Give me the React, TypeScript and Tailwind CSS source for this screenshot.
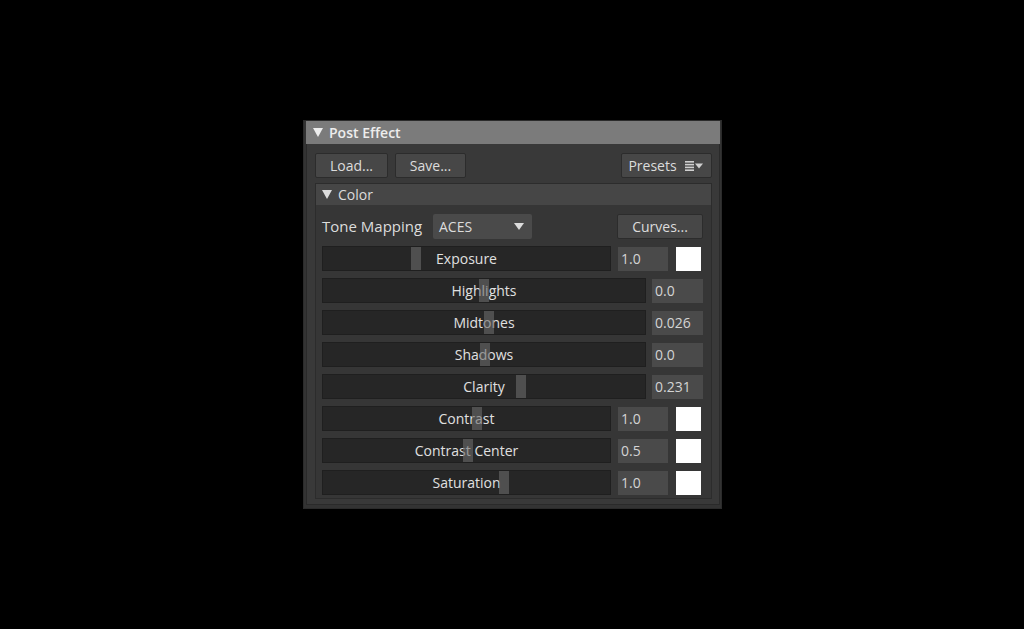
const font = { fontFamily: '"Open Sans", "Noto Sans", sans-serif' };

type Row = { label: string; value: string; handle: number; swatch?: boolean };

const rows: Row[] = [
  { label: "Exposure", value: "1.0", handle: 88, swatch: true },
  { label: "Highlights", value: "0.0", handle: 156 },
  { label: "Midtones", value: "0.026", handle: 161 },
  { label: "Shadows", value: "0.0", handle: 157 },
  { label: "Clarity", value: "0.231", handle: 193 },
  { label: "Contrast", value: "1.0", handle: 149, swatch: true },
  { label: "Contrast Center", value: "0.5", handle: 140, swatch: true },
  { label: "Saturation", value: "1.0", handle: 176, swatch: true },
];

function Button({ children, className = "" }: { children: React.ReactNode; className?: string }) {
  return (
    <div
      className={`flex h-[25px] items-center justify-center rounded-[2px] border border-[#2c2c2c] bg-[#474747] text-[14px] text-[#dcdcdc] ${className}`}
    >
      {children}
    </div>
  );
}

function SliderRow({ row }: { row: Row }) {
  return (
    <div className="flex h-[25px] items-center">
      <div
        className={`relative flex h-[25px] items-center justify-center border border-[#1f1f1f] bg-[#262626] text-[14px] text-[#e0e0e0] ${
          row.swatch ? "w-[289px]" : "w-[324px]"
        }`}
      >
        <span>{row.label}</span>
        <div
          className="absolute top-0 h-full w-[10px] bg-[#6a6a6a]/60"
          style={{ left: row.handle }}
        />
      </div>
      <div
        className={`flex h-[24px] items-center bg-[#4a4a4a] pl-[3px] text-[14px] text-[#d4d4d4] ${
          row.swatch ? "ml-[7px] w-[50px]" : "ml-[6px] w-[51px]"
        }`}
      >
        {row.value}
      </div>
      {row.swatch && <div className="ml-[8px] h-[24px] w-[25px] bg-white" />}
    </div>
  );
}

export default function App() {
  return (
    <div className="min-h-screen bg-black pl-[303px] pt-[120px]" style={font}>
      <div className="w-[419px] border border-[#2b2b2b] bg-[#333333] pb-[3px] pl-[2px] pr-[1px]">
        <div className="flex h-[23px] items-center gap-[6px] bg-[#7b7b7b] pl-[7px] text-[14px] font-semibold text-[#ededed]">
          <svg width="10" height="9" viewBox="0 0 10 9">
            <path d="M0 0h10L5 9z" fill="#ededed" />
          </svg>
          <span>Post Effect</span>
        </div>
        <div className="border-x border-b border-[#2a2a2a] bg-[#393939] pb-[5px] pl-[8px] pr-[7px] pt-[9px]">
          <div className="flex items-center">
            <Button className="w-[73px]">Load...</Button>
            <Button className="ml-[7px] w-[71px]">Save...</Button>
            <Button className="ml-auto w-[91px] gap-[8px]">
              <span>Presets</span>
              <svg width="20" height="10" viewBox="0 0 20 10">
                <rect x="0" y="0" width="9" height="1.6" fill="#d0d0d0" />
                <rect x="0" y="2.8" width="9" height="1.6" fill="#d0d0d0" />
                <rect x="0" y="5.6" width="9" height="1.6" fill="#d0d0d0" />
                <rect x="0" y="8.4" width="9" height="1.6" fill="#d0d0d0" />
                <path d="M10 2.5h8L14 7.5z" fill="#d0d0d0" />
              </svg>
            </Button>
          </div>
          <div className="mt-[5px] border border-[#2c2c2c]">
            <div className="flex h-[21px] items-center gap-[6px] bg-[#464646] pl-[6px] text-[14px] text-[#dcdcdc]">
              <svg width="10" height="9" viewBox="0 0 10 9">
                <path d="M0 0h10L5 9z" fill="#dcdcdc" />
              </svg>
              <span>Color</span>
            </div>
            <div className="flex flex-col gap-[7px] bg-[#363636] pb-[3px] pl-[6px] pr-[8px] pt-[9px]">
              <div className="flex h-[25px] items-center">
                <span className="w-[111px] text-[15px] text-[#dcdcdc]">Tone Mapping</span>
                <div className="flex h-[25px] w-[99px] items-center justify-between rounded-[2px] bg-[#4a4a4a] pl-[6px] pr-[8px] text-[14px] text-[#dcdcdc]">
                  <span>ACES</span>
                  <svg width="10" height="7" viewBox="0 0 10 7">
                    <path d="M0 0h10L5 7z" fill="#dcdcdc" />
                  </svg>
                </div>
                <Button className="ml-auto w-[86px]">Curves...</Button>
              </div>
              {rows.map((r) => (
                <SliderRow key={r.label} row={r} />
              ))}
            </div>
          </div>
        </div>
      </div>
    </div>
  );
}
